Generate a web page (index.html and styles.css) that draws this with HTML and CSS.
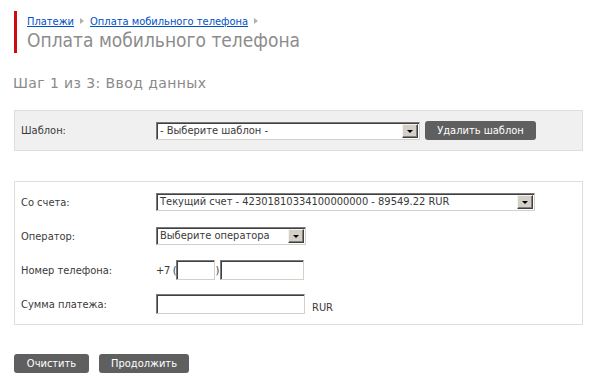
FILE: index.html
```html
<!DOCTYPE html>
<html lang="ru">
<head>
<meta charset="utf-8">
<title>Оплата мобильного телефона</title>
<link rel="stylesheet" href="styles.css">
</head>
<body>
<div class="page">
  <div class="head">
    <div class="crumbs">
      <a href="#">Платежи</a><span class="sep"></span><a href="#">Оплата мобильного телефона</a><span class="sep"></span>
    </div>
    <h1 class="title">Оплата мобильного телефона</h1>
  </div>
  <h2 class="step">Шаг 1 из 3: Ввод данных</h2>

  <div class="panel panel-gray">
    <div class="row row-tpl">
      <div class="label">Шаблон:</div>
      <div class="ctrl">
        <div class="select w-tpl"><span class="val">- Выберите шаблон -</span><span class="arrow"></span></div>
        <button class="btn btn-del">Удалить шаблон</button>
      </div>
    </div>
  </div>

  <div class="panel panel-form">
    <div class="row">
      <div class="label">Со счета:</div>
      <div class="ctrl">
        <div class="select w-acc"><span class="val">Текущий счет - 42301810334100000000 - 89549.22 RUR</span><span class="arrow"></span></div>
      </div>
    </div>
    <div class="row">
      <div class="label">Оператор:</div>
      <div class="ctrl">
        <div class="select w-op"><span class="val">Выберите оператора</span><span class="arrow"></span></div>
      </div>
    </div>
    <div class="row">
      <div class="label">Номер телефона:</div>
      <div class="ctrl">
        <span class="txt">+7 (</span><span class="input w-code"></span><span class="txt paren">)</span><span class="input w-num"></span>
      </div>
    </div>
    <div class="row">
      <div class="label">Сумма платежа:</div>
      <div class="ctrl">
        <span class="input w-sum"></span><span class="txt cur">RUR</span>
      </div>
    </div>
  </div>

  <div class="actions">
    <button class="btn btn-clear">Очистить</button>
    <button class="btn btn-next">Продолжить</button>
  </div>
</div>
</body>
</html>
```
FILE: styles.css
```css
html, body {
  margin: 0;
  padding: 0;
  background: #fff;
}
body {
  font-family: "DejaVu Sans Condensed", "DejaVu Sans", sans-serif;
  font-stretch: semi-condensed;
  font-size: 11px;
  color: #3a3a3a;
}
.page {
  padding: 11px 12px 0 14px;
}
.head {
  border-left: 3px solid #d10a11;
  padding-left: 10px;
  height: 42px;
  box-sizing: border-box;
}
.crumbs {
  height: 17px;
  padding-top: 3px;
  box-sizing: border-box;
  line-height: 13px;
  display: flex;
  align-items: center;
}
.crumbs a {
  color: #0050c8;
  text-decoration: underline;
}
.sep {
  display: inline-block;
  width: 0;
  height: 0;
  border-left: 4px solid #b0b0b0;
  border-top: 3px solid transparent;
  border-bottom: 3px solid transparent;
  margin: 0 6px 0 6px;
}
.title {
  margin: 0;
  font-weight: normal;
  font-size: 19px;
  line-height: 24px;
  color: #8c8c8c;
}
.step {
  margin: 21px 0 0 -1px;
  font-family: "DejaVu Sans", sans-serif;
  font-stretch: normal;
  font-weight: normal;
  font-size: 14px;
  letter-spacing: 0.4px;
  line-height: 18px;
  color: #8a8a8a;
}
.panel {
  border: 1px solid #dedede;
  padding: 0 6px;
}
.panel-gray {
  margin-top: 18px;
  background: #f0f0f0;
}
.panel-form {
  margin-top: 30px;
  padding-top: 3px;
  padding-bottom: 3px;
}
.row {
  display: flex;
  align-items: center;
  height: 34px;
}
.row-tpl {
  height: 39px;
}
.label {
  width: 135px;
  flex: none;
}
.ctrl {
  display: flex;
  align-items: center;
}
.select {
  display: flex;
  align-items: center;
  height: 18px;
  box-sizing: border-box;
  background: #fff;
  border: 1px solid;
  border-color: #7a7a7a #d4d0c8 #d4d0c8 #7a7a7a;
  box-shadow: inset 1px 1px 0 #404040;
  padding: 1px 1px 1px 2px;
}
.select .val {
  flex: 1;
  white-space: nowrap;
  overflow: hidden;
  padding-left: 1px;
  line-height: 14px;
}
.arrow {
  flex: none;
  width: 16px;
  height: 14px;
  box-sizing: border-box;
  background: #d4d0c8;
  border: 1px solid;
  border-color: #f4f4f4 #404040 #404040 #f4f4f4;
  box-shadow: inset -1px -1px 0 #808080;
  display: flex;
  align-items: center;
  justify-content: center;
}
.arrow::after {
  content: "";
  display: block;
  width: 0;
  height: 0;
  border-top: 3px solid #000;
  border-left: 3px solid transparent;
  border-right: 3px solid transparent;
  margin-top: 1px;
}
.w-tpl { width: 264px; }
.w-acc { width: 379px; }
.w-op { width: 150px; }
.input {
  display: inline-block;
  height: 20px;
  box-sizing: border-box;
  background: #fff;
  border: 1px solid;
  border-color: #7a7a7a #d4d0c8 #d4d0c8 #7a7a7a;
  box-shadow: inset 1px 1px 0 #404040;
}
.w-code { width: 39px; }
.w-num { width: 84px; }
.w-sum { width: 149px; }
.txt {
  white-space: nowrap;
  letter-spacing: -0.3px;
}
.paren {
  margin: 0 1px 0 0;
}
.cur {
  margin-left: 7px;
  margin-top: 6px;
  letter-spacing: 0;
}
.btn {
  font-family: inherit;
  font-stretch: inherit;
  font-size: 11px;
  color: #fff;
  background: #5f5f5f;
  border: 0;
  border-radius: 3px;
  height: 19px;
  padding: 0;
  line-height: 19px;
  text-align: center;
}
.btn-del {
  width: 111px;
  margin-left: 5px;
}
.actions {
  display: flex;
  gap: 10px;
  margin-top: 29px;
}
.btn-clear { width: 75px; }
.btn-next { width: 90px; }
```
